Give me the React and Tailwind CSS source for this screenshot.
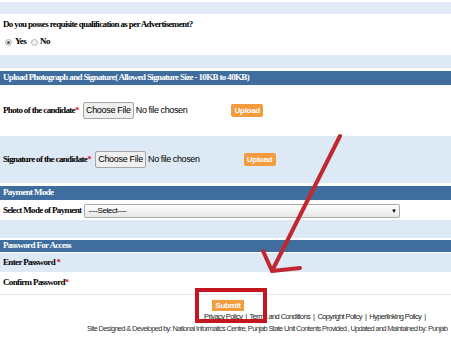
import React from 'react';

const serif = "font-['Liberation_Serif','Times_New_Roman',serif]";
const sans = "font-['Liberation_Sans',Arial,sans-serif]";

function Star() {
    return <span className="text-[#e0141e]">*</span>;
}

function Header({ children }) {
    return (
        <div className="flex h-[14px] items-center bg-[#3f6e9e] px-[3px] text-[9px] font-bold tracking-[-0.65px] text-white">
            {children}
        </div>
    );
}

function Radio({ checked }) {
    return (
        <span className="flex h-[7px] w-[7px] items-center justify-center rounded-full border border-[#b5b5b5] bg-[#f2f2f2]">
            {checked && <span className="h-[3px] w-[3px] rounded-full bg-[#555]" />}
        </span>
    );
}

function FileField() {
    return (
        <div className={`flex items-center ${sans}`}>
            <span className="flex h-[17px] w-[51px] items-center justify-center rounded-[2px] border border-[#a5a5a5] bg-[#efefef] text-[9px] font-normal tracking-[-0.3px] text-black">
                Choose File
            </span>
            <span className="ml-[2px] text-[9px] font-normal tracking-[-0.4px] text-black">No file chosen</span>
            <span className="ml-[44px] flex h-[13px] w-[32px] items-center justify-center rounded-[2px] bg-[#f39b3d] text-[8px] font-bold tracking-[-0.3px] text-white">
                Upload
            </span>
        </div>
    );
}

export default function App() {
    return (
        <div className={`relative h-[338px] w-[451px] overflow-hidden bg-white text-black ${serif}`}>
            <div className="h-[2px]" />
            <div className="h-[12px] bg-[#e2ecf7]" />

            <div className="h-[41px] px-[3px] pt-[4px] text-[9px] font-bold tracking-[-0.65px]">
                <div className="h-[12px] leading-[12px]">Do you posses requisite qualification as per Advertisement?</div>
                <div className="mt-[6px] flex h-[12px] items-center">
                    <span className="ml-[2px]"><Radio checked /></span>
                    <span className="ml-[3px]">Yes</span>
                    <span className="ml-[5px]"><Radio /></span>
                    <span className="ml-[2px]">No</span>
                </div>
            </div>

            <div className="h-[13px] bg-[#dde9f5]" />
            <div className="mt-[3px]">
                <Header>Upload Photograph and Signature( Allowed Signature Size - 10KB to 40KB)</Header>
            </div>

            <div className="flex h-[51px] items-center px-[3px] text-[9px] font-bold tracking-[-0.65px]">
                <span>Photo of the candidate<Star /></span>
                <span className="ml-[4px] tracking-normal"><FileField /></span>
            </div>

            <div className="flex h-[47px] items-center bg-[#dde9f5] px-[3px] text-[9px] font-bold tracking-[-0.65px]">
                <span>Signature of the candidate<Star /></span>
                <span className="ml-[4px] tracking-normal"><FileField /></span>
            </div>

            <div className="mt-[3px]">
                <Header>Payment Mode</Header>
            </div>

            <div className="mt-[3px] flex h-[16px] items-center px-[3px] text-[9px] font-bold tracking-[-0.65px]">
                <span>Select Mode of Payment</span>
                <div className={`ml-[3px] flex h-[14px] w-[316px] items-center justify-between rounded-[2px] border border-[#a9a9a9] bg-gradient-to-b from-white to-[#e6e6e6] px-[3px] text-[8px] font-normal tracking-[-0.4px] ${sans}`}>
                    <span>----Select----</span>
                    <span className="text-[6px]">▼</span>
                </div>
            </div>

            <div className="mt-[1px] h-[18px] bg-[#dde9f5]" />
            <div className="mt-[2px]">
                <div className="flex h-[12px] items-center bg-[#3f6e9e] px-[3px] text-[9px] font-bold tracking-[-0.65px] text-white">
                    Password For Access
                </div>
            </div>

            <div className="mt-[1px] flex h-[19px] items-center bg-[#dde9f5] px-[3px] text-[9px] font-bold tracking-[-0.65px]">
                Enter Password&nbsp;<Star />
            </div>
            <div className="flex h-[23px] items-center border-b border-[#e3e8ee] px-[3px] text-[9px] font-bold tracking-[-0.65px]">
                Confirm Password<Star />
            </div>

            <div className={sans}>
                <div className="ml-[212px] mt-[5px] flex h-[11px] w-[32px] items-center justify-center bg-[#f39b3d] text-[8px] font-bold tracking-[-0.3px] text-white">
                    Submit
                </div>
                <div className="mt-[2px] h-[8px] whitespace-nowrap pl-[204px] text-[7.5px] leading-[8px] tracking-[-0.6px] text-[#222]">
                    Privacy Policy&nbsp; | &nbsp;Terms and Conditions&nbsp; | &nbsp;Copyright Policy&nbsp; | &nbsp;Hyperlinking Policy&nbsp; |
                </div>
                <div className="mt-[4px] h-[8px] whitespace-nowrap pl-[87px] text-[7.5px] leading-[8px] tracking-[-0.68px] text-[#333]">
                    Site Designed &amp; Developed by: National Informatics Centre, Punjab State Unit Contents Provided , Updated and Maintained by: Punjab
                </div>
            </div>

            <svg className="pointer-events-none absolute inset-0" width="451" height="338" viewBox="0 0 451 338">
                <g stroke="#c1272f" strokeWidth="4" strokeLinecap="round" strokeLinejoin="round" fill="none">
                    <path d="M340 136 L272 271" />
                    <path d="M263 251 L272 271 L300 268" />
                </g>
                <rect x="197" y="290" width="68" height="31" fill="none" stroke="#c4161f" strokeWidth="4" />
            </svg>
        </div>
    );
}
